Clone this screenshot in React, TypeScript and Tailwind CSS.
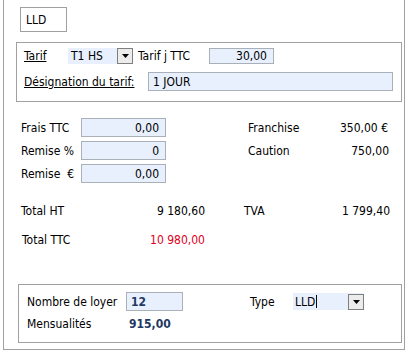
import React from 'react'

const font = "font-['DejaVu_Sans_Condensed','DejaVu_Sans',sans-serif]"

function Field({ value, className = '', bold = false }: { value: string; className?: string; bold?: boolean }) {
  return (
    <div
      className={`flex items-center justify-end pr-[6px] bg-[#e8f0fd] border border-[#a9b0b8] text-[12px] leading-none ${bold ? 'font-bold text-[#1f3864]' : ''} ${className}`}
    >
      {value}
    </div>
  )
}

function DropButton() {
  return (
    <div className="w-[16px] h-[16px] border border-[#7f7f7f] bg-[#ececec] flex items-center justify-center">
      <svg width="7" height="4" viewBox="0 0 7 4">
        <polygon points="0,0 7,0 3.5,4" fill="#000" />
      </svg>
    </div>
  )
}

export default function App() {
  return (
    <div className={`w-[408px] h-[351px] bg-white text-black text-[12px] ${font}`}>
      <div className="ml-[3px] w-[402px] h-[350px] border-l border-r border-b border-[#a0a0a0] flex flex-col">
        {/* code */}
        <div className="mt-[7px] ml-[16px] w-[47px] h-[25px] border border-[#a0a0a0] flex items-center pl-[5px]">
          LLD
        </div>

        {/* tarif */}
        <div className="mt-[10px] ml-[12px] w-[386px] h-[60px] border border-[#a0a0a0] flex flex-col pl-[7px]">
          <div className="mt-[5px] h-[16px] flex items-center">
            <span className="underline w-[44px]">Tarif</span>
            <div className="w-[65px] h-[16px] bg-[#e8f0fd] flex items-center justify-between pl-[3px]">
              <span>T1 HS</span>
              <DropButton />
            </div>
            <span className="ml-[5px] w-[71px]">Tarif j TTC</span>
            <Field value="30,00" className="w-[65px] h-[16px]" />
          </div>
          <div className="mt-[8px] h-[19px] flex items-center">
            <span className="underline w-[124px]">Désignation du tarif:</span>
            <div className="w-[245px] h-[19px] bg-[#e8f0fd] border border-[#a9b0b8] flex items-center pl-[4px]">
              1 JOUR
            </div>
          </div>
        </div>

        {/* frais */}
        <div className="mt-[16px] ml-[17px] flex">
          <div className="flex flex-col gap-[4px] w-[227px]">
            <div className="h-[19px] flex items-center">
              <span className="w-[60px]">Frais TTC</span>
              <Field value="0,00" className="w-[85px] h-[19px]" />
            </div>
            <div className="h-[19px] flex items-center">
              <span className="w-[60px]">Remise %</span>
              <Field value="0" className="w-[85px] h-[19px]" />
            </div>
            <div className="h-[19px] flex items-center">
              <span className="w-[60px]">Remise&nbsp; €</span>
              <Field value="0,00" className="w-[85px] h-[19px]" />
            </div>
          </div>
          <div className="flex flex-col gap-[4px]">
            <div className="h-[19px] flex items-center">
              <span className="w-[80px]">Franchise</span>
              <span className="w-[60px] text-right">350,00 €</span>
            </div>
            <div className="h-[19px] flex items-center">
              <span className="w-[80px]">Caution</span>
              <span className="w-[61px] text-right">750,00</span>
            </div>
          </div>
        </div>

        {/* totals */}
        <div className="mt-[18px] ml-[17px] h-[19px] flex items-center">
          <span className="w-[120px]">Total HT</span>
          <span className="w-[64px] text-right">9 180,60</span>
          <span className="ml-[39px] w-[80px]">TVA</span>
          <span className="w-[66px] text-right">1 799,40</span>
        </div>
        <div className="mt-[10px] ml-[18px] h-[19px] flex items-center">
          <span className="w-[105px]">Total TTC</span>
          <span className="w-[78px] text-right text-[#e0001b]">10 980,00</span>
        </div>

        {/* loyer */}
        <div className="mt-[35px] ml-[14px] w-[384px] h-[59px] border border-[#a0a0a0] flex flex-col pl-[8px]">
          <div className="mt-[7px] h-[19px] flex items-center">
            <span className="w-[99px]">Nombre de loyer</span>
            <div className="w-[57px] h-[19px] bg-[#e8f0fd] border border-[#a9b0b8] flex items-center pl-[4px] font-bold text-[#1f3864]">
              12
            </div>
            <span className="ml-[67px] w-[43px]">Type</span>
            <div className="w-[71px] h-[17px] bg-[#e8f0fd] flex items-center justify-between pl-[2px]">
              <span className="flex items-center">
                LLD<span className="ml-[1px] w-[1px] h-[13px] bg-black" />
              </span>
              <DropButton />
            </div>
          </div>
          <div className="mt-[5px] h-[16px] flex items-center">
            <span className="w-[102px]">Mensualités</span>
            <span className="font-bold text-[#1f3864]">915,00</span>
          </div>
        </div>
      </div>
    </div>
  )
}
